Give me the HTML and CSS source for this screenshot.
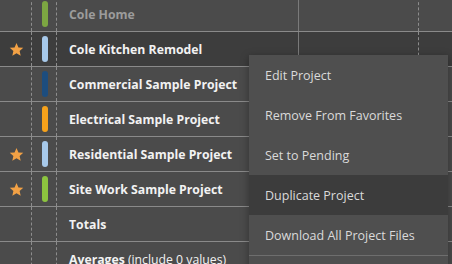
FILE: index.html
```html
<!DOCTYPE html>
<html>
<head>
<meta charset="utf-8">
<link rel="stylesheet" href="styles.css">
</head>
<body>
<div class="table">
  <div class="row faded">
    <div class="c-star"></div>
    <div class="c-bar"><span class="bar green"></span></div>
    <div class="c-name">Cole Home</div>
    <div class="c-a"></div>
    <div class="c-b"></div>
  </div>
  <div class="row selected">
    <div class="c-star"><svg class="star" viewBox="0 0 24 24"><path d="M12 1.5l3.1 7.1 7.7.7-5.8 5.1 1.7 7.6L12 18l-6.7 4 1.7-7.6-5.8-5.1 7.7-.7z"/></svg></div>
    <div class="c-bar"><span class="bar lightblue"></span></div>
    <div class="c-name">Cole Kitchen Remodel</div>
    <div class="c-a"></div>
    <div class="c-b"></div>
  </div>
  <div class="row">
    <div class="c-star"></div>
    <div class="c-bar"><span class="bar darkblue"></span></div>
    <div class="c-name">Commercial Sample Project</div>
    <div class="c-a"></div>
    <div class="c-b"></div>
  </div>
  <div class="row">
    <div class="c-star"></div>
    <div class="c-bar"><span class="bar orange"></span></div>
    <div class="c-name">Electrical Sample Project</div>
    <div class="c-a"></div>
    <div class="c-b"></div>
  </div>
  <div class="row">
    <div class="c-star"><svg class="star" viewBox="0 0 24 24"><path d="M12 1.5l3.1 7.1 7.7.7-5.8 5.1 1.7 7.6L12 18l-6.7 4 1.7-7.6-5.8-5.1 7.7-.7z"/></svg></div>
    <div class="c-bar"><span class="bar lightblue"></span></div>
    <div class="c-name">Residential Sample Project</div>
    <div class="c-a"></div>
    <div class="c-b"></div>
  </div>
  <div class="row">
    <div class="c-star"><svg class="star" viewBox="0 0 24 24"><path d="M12 1.5l3.1 7.1 7.7.7-5.8 5.1 1.7 7.6L12 18l-6.7 4 1.7-7.6-5.8-5.1 7.7-.7z"/></svg></div>
    <div class="c-bar"><span class="bar green"></span></div>
    <div class="c-name">Site Work Sample Project</div>
    <div class="c-a"></div>
    <div class="c-b"></div>
  </div>
  <div class="row">
    <div class="c-star"></div>
    <div class="c-bar"></div>
    <div class="c-name">Totals</div>
    <div class="c-a"></div>
    <div class="c-b"></div>
  </div>
  <div class="row">
    <div class="c-star"></div>
    <div class="c-bar"></div>
    <div class="c-name">Averages <span class="normal">(include 0 values)</span></div>
    <div class="c-a"></div>
    <div class="c-b"></div>
  </div>
</div>
<div class="menu">
  <div class="item">Edit Project</div>
  <div class="item">Remove From Favorites</div>
  <div class="item">Set to Pending</div>
  <div class="item hover">Duplicate Project</div>
  <div class="item">Download All Project Files</div>
  <div class="item sep"></div>
</div>
</body>
</html>
```
FILE: styles.css
```css
html, body {
  margin: 0;
  padding: 0;
  background: #4b4b4b;
  overflow: hidden;
  height: 264px;
}
body {
  font-family: "Open Sans", "Noto Sans", sans-serif;
  color: #f2f2f2;
}
.table {
  margin-top: -3px;
  width: 452px;
}
.row {
  display: grid;
  grid-template-columns: 32px 25px 242px 120px 1fr;
  height: 34px;
  border-bottom: 1px solid #8a8a8a;
}
.row.selected {
  background: #3d3d3d;
}
.row > div {
  display: flex;
  align-items: center;
  min-width: 0;
}
.c-star {
  justify-content: center;
  border-right: 1px dashed #8d8d8d;
}
.c-bar {
  border-right: 1px dashed #8d8d8d;
  padding-left: 10px;
}
.c-name {
  padding-left: 12px;
  font-weight: 700;
  font-size: 12.25px;
  white-space: nowrap;
  border-right: 1px solid #7a7a7a;
}
.c-a {
  border-right: 1px dashed #8d8d8d;
}
.normal {
  font-weight: 400;
  margin-left: 3px;
}
.faded .c-name {
  color: #9c9c9c;
}
.faded .bar {
  opacity: 0.75;
}
.bar {
  display: block;
  width: 6px;
  height: 26px;
  border-radius: 3px;
}
.green { background: #8cc43f; }
.lightblue { background: #a7c9ea; }
.darkblue { background: #1d4d7e; }
.orange { background: #f7a21b; }
.star {
  width: 15px;
  height: 15px;
  fill: #f2a145;
  margin-left: 1px;
}
.menu {
  position: absolute;
  left: 249px;
  top: 55px;
  width: 199px;
  background: #4f4f4f;
  box-shadow: 0 2px 8px rgba(0, 0, 0, 0.35);
}
.item {
  height: 40px;
  display: flex;
  align-items: center;
  padding-left: 16px;
  font-size: 12.5px;
  color: #dadada;
}
.item.hover {
  background: #3c3c3c;
}
.item.sep {
  border-top: 1px solid #6e6e6e;
}
```
